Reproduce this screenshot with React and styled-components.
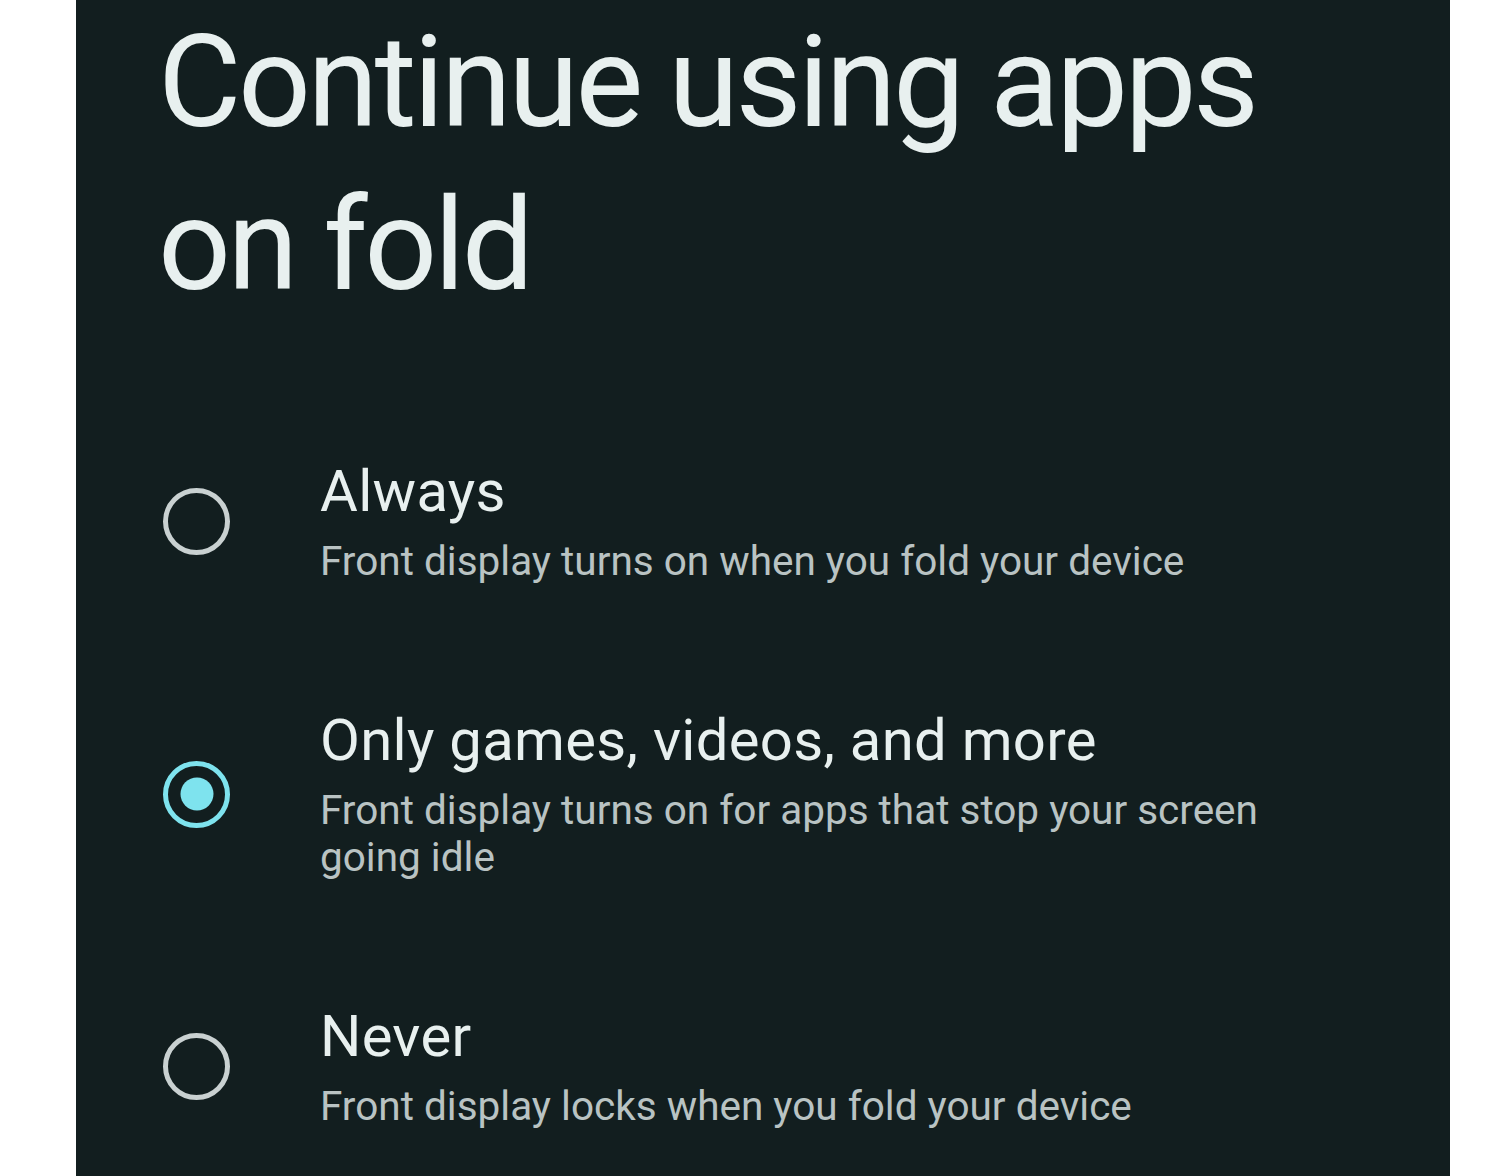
import React, { useState } from "react";
import styled, { createGlobalStyle } from "styled-components";

const GlobalStyle = createGlobalStyle`
  html, body {
    margin: 0;
    padding: 0;
    background: #ffffff;
  }
`;

const options = [
  {
    id: "always",
    title: "Always",
    desc: "Front display turns on when you fold your device",
  },
  {
    id: "games",
    title: "Only games, videos, and more",
    desc: "Front display turns on for apps that stop your screen going idle",
  },
  {
    id: "never",
    title: "Never",
    desc: "Front display locks when you fold your device",
  },
];

const App = () => {
  const [selected, setSelected] = useState("games");
  return (
    <Page>
      <GlobalStyle />
      <Panel>
        <Title>Continue using apps on fold</Title>
        <List>
          {options.map((o) => (
            <Row key={o.id} onClick={() => setSelected(o.id)}>
              <Radio $checked={selected === o.id} />
              <Texts>
                <OptionTitle>{o.title}</OptionTitle>
                <OptionDesc>{o.desc}</OptionDesc>
              </Texts>
            </Row>
          ))}
        </List>
      </Panel>
    </Page>
  );
};

export default App;

const Page = styled.div`
  width: 1500px;
  height: 1176px;
  display: flex;
  background: #fff;
  overflow: hidden;
`;

const Panel = styled.div`
  margin-left: 76px;
  width: 1374px;
  height: 1176px;
  background: #121e1f;
  font-family: Roboto, "Open Sans", sans-serif;
  color: #e6eeee;
  overflow: hidden;
`;

const Title = styled.h1`
  margin: 1px 0 0;
  padding: 0 0 0 82px;
  width: 1150px;
  font-size: 128px;
  font-weight: 400;
  line-height: 163px;
  letter-spacing: -3.4px;
  color: #e8f0ef;
`;

const List = styled.div`
  display: flex;
  flex-direction: column;
  padding-top: 70px;
`;

const Row = styled.div`
  display: flex;
  align-items: center;
  gap: 90px;
  padding: 61px 0 61px 87px;
  cursor: pointer;
`;

const Radio = styled.span`
  flex: none;
  position: relative;
  width: 67px;
  height: 67px;
  box-sizing: border-box;
  border-radius: 50%;
  border: 5px solid ${(p) => (p.$checked ? "#7ee3ee" : "#c9d1d1")};

  &::after {
    content: "";
    display: ${(p) => (p.$checked ? "block" : "none")};
    position: absolute;
    left: 50%;
    top: 50%;
    width: 33px;
    height: 33px;
    border-radius: 50%;
    background: #7ee3ee;
    transform: translate(-50%, -50%);
  }
`;

const Texts = styled.div`
  display: flex;
  flex-direction: column;
  width: 960px;
`;

const OptionTitle = styled.div`
  font-size: 58px;
  line-height: 66px;
  letter-spacing: 0.3px;
  color: #e8f0ef;
`;

const OptionDesc = styled.div`
  margin-top: 14px;
  font-size: 40.5px;
  line-height: 47px;
  color: #b9c3c3;
`;
